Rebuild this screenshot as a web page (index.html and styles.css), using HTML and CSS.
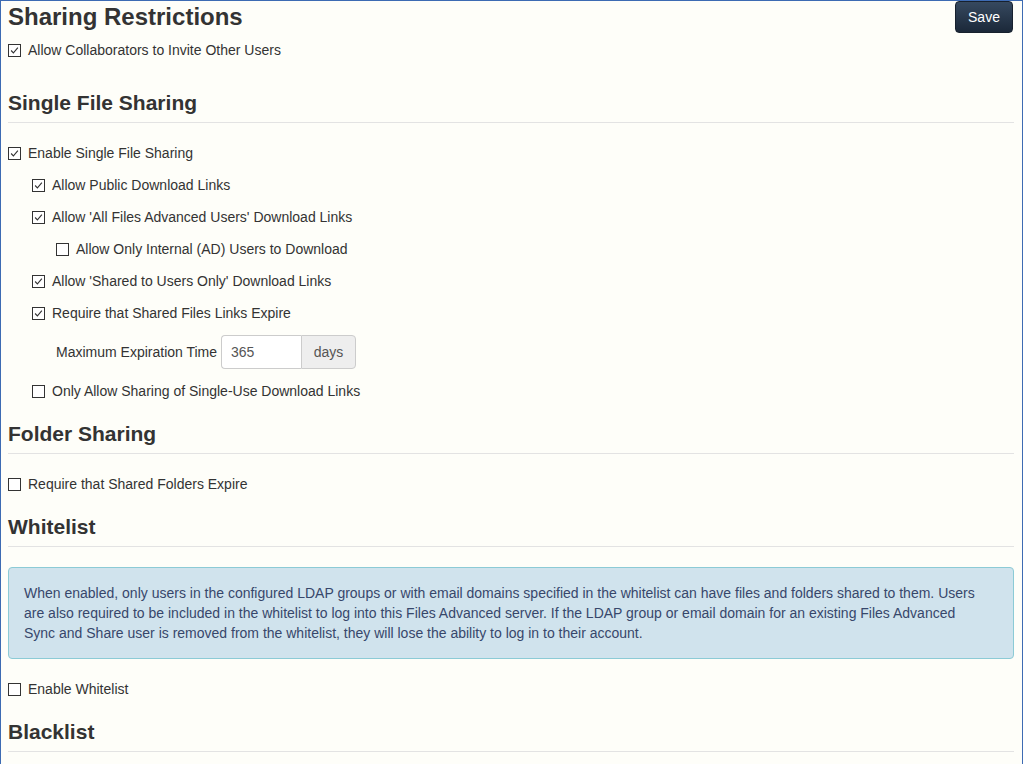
FILE: index.html
```html
<!DOCTYPE html>
<html lang="en">
<head>
    <meta charset="UTF-8">
    <title>Sharing Restrictions</title>
    <link rel="stylesheet" href="styles.css">
</head>
<body>
    <div class="page">
        <div class="page-header">
            <h1>Sharing Restrictions</h1>
            <button class="btn-save">Save</button>
        </div>
        <div class="row">
            <span class="box checked"><svg viewBox="0 0 13 13"><path d="M2.5 6.5 L5.2 9.3 L10.5 3.2"/></svg></span>
            Allow Collaborators to Invite Other Users
        </div>

        <h2 class="section first">Single File Sharing</h2>
        <div class="row">
            <span class="box checked"><svg viewBox="0 0 13 13"><path d="M2.5 6.5 L5.2 9.3 L10.5 3.2"/></svg></span>
            Enable Single File Sharing
        </div>
        <div class="row indent1">
            <span class="box checked"><svg viewBox="0 0 13 13"><path d="M2.5 6.5 L5.2 9.3 L10.5 3.2"/></svg></span>
            Allow Public Download Links
        </div>
        <div class="row indent1">
            <span class="box checked"><svg viewBox="0 0 13 13"><path d="M2.5 6.5 L5.2 9.3 L10.5 3.2"/></svg></span>
            Allow 'All Files Advanced Users' Download Links
        </div>
        <div class="row indent2">
            <span class="box"></span>
            Allow Only Internal (AD) Users to Download
        </div>
        <div class="row indent1">
            <span class="box checked"><svg viewBox="0 0 13 13"><path d="M2.5 6.5 L5.2 9.3 L10.5 3.2"/></svg></span>
            Allow 'Shared to Users Only' Download Links
        </div>
        <div class="row indent1">
            <span class="box checked"><svg viewBox="0 0 13 13"><path d="M2.5 6.5 L5.2 9.3 L10.5 3.2"/></svg></span>
            Require that Shared Files Links Expire
        </div>
        <div class="field-row indent2">
            <label for="max-exp">Maximum Expiration Time</label>
            <div class="input-group">
                <input id="max-exp" type="text" value="365">
                <span class="addon">days</span>
            </div>
        </div>
        <div class="row indent1">
            <span class="box"></span>
            Only Allow Sharing of Single-Use Download Links
        </div>

        <h2 class="section">Folder Sharing</h2>
        <div class="row">
            <span class="box"></span>
            Require that Shared Folders Expire
        </div>

        <h2 class="section">Whitelist</h2>
        <div class="alert-info">
            When enabled, only users in the configured LDAP groups or with email domains specified in the whitelist can have files and folders shared to them. Users are also required to be included in the whitelist to log into this Files Advanced server. If the LDAP group or email domain for an existing Files Advanced Sync and Share user is removed from the whitelist, they will lose the ability to log in to their account.
        </div>
        <div class="row">
            <span class="box"></span>
            Enable Whitelist
        </div>

        <h2 class="section">Blacklist</h2>
    </div>
</body>
</html>
```

FILE: styles.css
```css
html, body {
    margin: 0;
    height: 100%;
}
body {
    font-family: "Liberation Sans", Arial, sans-serif;
    font-size: 14px;
    color: #333;
    background-color: #fefef9;
}
.page {
    box-sizing: border-box;
    min-height: 100vh;
    border: 1px solid #3d6bb3;
    padding: 0 8px 0 7px;
    overflow: hidden;
}
.page-header {
    display: flex;
    justify-content: space-between;
    align-items: flex-start;
    height: 33px;
}
h1 {
    margin: 3px 0 0 0;
    font-size: 24px;
    line-height: 26px;
    font-weight: bold;
}
.btn-save {
    width: 58px;
    height: 32px;
    margin-right: 1px;
    border: 1px solid #17212e;
    border-radius: 4px;
    background: linear-gradient(#36495f, #1b2839);
    color: #fff;
    font-family: inherit;
    font-size: 14px;
}
.row {
    display: flex;
    align-items: center;
    height: 32px;
}
.indent1 { padding-left: 24px; }
.indent2 { padding-left: 48px; }
.box {
    box-sizing: border-box;
    width: 13px;
    height: 13px;
    margin-right: 7px;
    border: 1px solid #333;
    background: #fff;
    flex-shrink: 0;
}
.box svg {
    display: block;
    width: 11px;
    height: 11px;
}
.box path {
    fill: none;
    stroke: #333;
    stroke-width: 1.3;
}
.section {
    margin: 16px 0 14px 0;
    padding-bottom: 8px;
    border-bottom: 1px solid #e3e3e3;
    font-size: 21px;
    line-height: 22px;
    font-weight: bold;
}
.section.first {
    margin-top: 26px;
}
.field-row {
    display: flex;
    align-items: center;
    margin: 6px 0;
}
.field-row label {
    margin-right: 4px;
}
.input-group {
    display: flex;
    height: 34px;
}
.input-group input {
    box-sizing: border-box;
    width: 80px;
    height: 34px;
    padding: 6px 9px;
    border: 1px solid #ccc;
    border-right: none;
    border-radius: 4px 0 0 4px;
    background: #fff;
    color: #555;
    font-family: inherit;
    font-size: 14px;
}
.input-group .addon {
    box-sizing: border-box;
    width: 55px;
    display: flex;
    align-items: center;
    justify-content: center;
    border: 1px solid #ccc;
    border-radius: 0 4px 4px 0;
    background: #eee;
    color: #555;
}
.alert-info {
    margin: 20px 0 14px 0;
    padding: 15px 25px 15px 15px;
    border: 1px solid #8ccbd6;
    border-radius: 4px;
    background: #d0e3ed;
    color: #37476b;
    line-height: 20px;
}
```
